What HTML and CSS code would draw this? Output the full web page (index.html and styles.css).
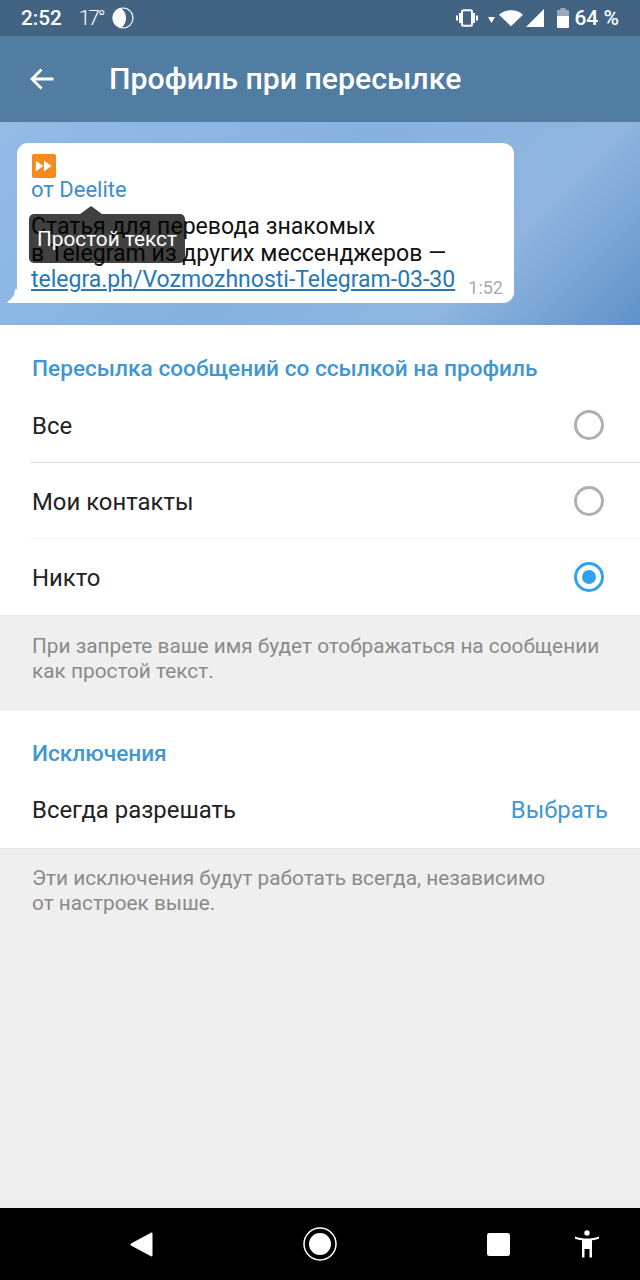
FILE: index.html
```html
<!DOCTYPE html>
<html lang="ru">
<head>
<meta charset="utf-8">
<title>Профиль при пересылке</title>
<link rel="stylesheet" href="styles.css">
</head>
<body>
<div class="screen">
  <header class="status">
    <div class="status-left">
      <span class="time">2:52</span>
      <span class="temp">17°</span>
      <svg class="moon" width="22" height="22" viewBox="0 0 22 22"><circle cx="11" cy="11" r="10" fill="none" stroke="#fff" stroke-width="1.2"/><path d="M9 1.200a10 10 0 0 0 0 19.600c3-1.800 5-5.400 5-9.800s-2-8-5-9.800z" fill="#fff"/></svg>
    </div>
    <div class="status-right">
      <svg class="ic-vib" width="24" height="18" viewBox="0 0 24 18"><rect x="7" y="1.200" width="10" height="15.600" rx="1.500" fill="none" stroke="#fff" stroke-width="2"/><path d="M4 4h2v10H4zM18 4h2v10h-2zM1 6.500h2v5H1zM21 6.500h2v5h-2z" fill="#fff"/></svg>
      <svg class="ic-arrow" width="7" height="6" viewBox="0 0 8 7"><path d="M0 0h8L4 7z" fill="#fff"/></svg>
      <svg class="ic-wifi" width="24" height="18" viewBox="0 0 26 18"><path d="M0 5.500C3.500 2 8 .5 13 .5s9.500 1.500 13 5L13 18z" fill="#fff"/></svg>
      <svg class="ic-signal" width="19" height="18" viewBox="0 0 19 18"><path d="M0 18L18 0v18z" fill="#fff"/></svg>
      <svg class="ic-batt" width="12" height="20" viewBox="0 0 12 20"><path d="M3.500 0h5v2H11a1 1 0 0 1 1 1v6H0V3a1 1 0 0 1 1-1h2.500z" fill="#fff" fill-opacity=".45"/><path d="M0 8h12v11a1 1 0 0 1-1 1H1a1 1 0 0 1-1-1z" fill="#fff"/></svg>
      <span class="batt-text">64 %</span>
    </div>
  </header>

  <div class="toolbar">
    <svg class="back" width="26" height="24" viewBox="0 0 26 24"><path d="M24.500 12H3M12.500 2.500L3 12l9.500 9.500" fill="none" stroke="#fff" stroke-width="2.800"/></svg>
    <h1 class="title">Профиль при пересылке</h1>
  </div>

  <section class="preview">
    <div class="bubble">
      <svg class="emoji" width="24" height="24" viewBox="0 0 25 25"><rect width="25" height="25" rx="2" fill="#f58a1f"/><path d="M4 7l8 5.500-8 5.500zM12.500 7l8 5.500-8 5.500z" fill="#fff"/></svg>
      <div class="from">от Deelite</div>
      <p class="msg">Статья для перевода знакомых<br>в Telegram из других мессенджеров —</p>
      <div class="last-line">
        <a class="link">telegra.ph/Vozmozhnosti-Telegram-03-30</a>
        <span class="stamp">1:52</span>
      </div>
      <svg class="tail" width="12" height="14" viewBox="0 0 12 14"><path d="M12 0v14H1C0 14 0 13 .800 12.500 5 10 8 6 8 0z" fill="#fff"/></svg>
      <div class="tooltip">Простой текст</div>
    </div>
  </section>

  <section class="card">
    <h2 class="section-title">Пересылка сообщений со ссылкой на профиль</h2>
    <div class="row"><span class="label">Все</span><span class="radio"></span></div>
    <div class="row row-faint"><span class="label">Мои контакты</span><span class="radio"></span></div>
    <div class="row row-last"><span class="label">Никто</span><span class="radio radio-on"></span></div>
  </section>
  <div class="hint hint-first">При запрете ваше имя будет отображаться на сообщении<br>как простой текст.</div>

  <section class="card card-exc">
    <h2 class="section-title">Исключения</h2>
    <div class="row row-short"><span>Всегда разрешать</span><span class="choose">Выбрать</span></div>
  </section>
  <div class="hint hint-fill">Эти исключения будут работать всегда, независимо<br>от настроек выше.</div>

  <nav class="navbar">
    <svg class="nav-back" width="23" height="25" viewBox="0 0 23 25"><path d="M21 .800c.8-.5 1.500 0 1.500 1v21.400c0 1-.7 1.500-1.500 1L1 13.500c-.8-.5-.8-1.500 0-2z" fill="#fff"/></svg>
    <svg class="nav-home" width="34" height="34" viewBox="0 0 34 34"><circle cx="17" cy="17" r="16" fill="none" stroke="#fff" stroke-width="1.500"/><circle cx="17" cy="17" r="11" fill="#fff"/></svg>
    <svg class="nav-recent" width="23" height="23" viewBox="0 0 23 23"><rect width="23" height="23" rx="2.500" fill="#fff"/></svg>
    <svg class="nav-a11y" width="24" height="28" viewBox="0 0 24 28"><circle cx="12" cy="3" r="2.700" fill="#fff"/><path d="M0 6.500c4 1.500 8 2 12 2s8-.5 12-2l.5 2c-2.500 1-5 1.500-7.500 1.800V27.500h-2.500V19h-5v8.500H7V10.300C4.500 10 2 9.500-.5 8.500z" fill="#fff"/></svg>
  </nav>
</div>
</body>
</html>
```

FILE: styles.css
```css
* { box-sizing: border-box; }
html, body { margin: 0; padding: 0; }
body { font-family: Roboto, "Noto Sans", sans-serif; background: #efefef; }
.screen { width: 640px; height: 1280px; display: flex; flex-direction: column; overflow: hidden; background: #efefef; }

.status { height: 36px; flex: none; background: #426482; color: #fff; display: flex; justify-content: space-between; align-items: center; padding: 0 21px 0 21px; }
.status-left, .status-right { display: flex; align-items: center; }
.time { font-size: 20.700px; font-weight: 500; }
.temp { font-size: 21px; font-weight: 300; margin-left: 17px; letter-spacing: -2.200px; }
.moon { margin-left: 9px; }
.status-right svg { display: block; }
.ic-arrow { margin-left: 9px; margin-top: 4px; }
.ic-wifi { margin-left: 4px; }
.ic-signal { margin-left: 3px; }
.ic-batt { margin-left: 12px; }
.batt-text { font-size: 21px; font-weight: 500; margin-left: 5px; }

.toolbar { height: 86px; flex: none; background: #517da2; display: flex; align-items: center; padding-left: 29px; }
.back { display: block; }
.title { margin: 0 0 2px 54px; font-size: 30.250px; font-weight: 500; color: #fff; white-space: nowrap; }

.preview { height: 203px; flex: none; padding: 21px 0 0 17px; background: linear-gradient(135deg, #92bbe6 0%, #86b2e0 45%, #8fb5df 75%, #5f91c8 100%); }
.bubble { position: relative; width: 497px; height: 160px; background: #fff; border-radius: 11px 11px 11px 0; padding: 11px 10px 0 14px; }
.emoji { display: block; margin-left: 1px; }
.from { font-size: 22px; color: #3d8ec9; line-height: 24px; }
.msg { margin: 11px 0 0; font-size: 23.100px; line-height: 27px; color: #111; white-space: nowrap; }
.last-line { display: flex; justify-content: space-between; align-items: flex-end; margin-top: -1px; }
.link { font-size: 23px; line-height: 27px; color: #2678b6; text-decoration: underline; white-space: nowrap; }
.stamp { font-size: 18px; color: #aaa; margin-bottom: -5px; margin-right: 1px; }
.tail { position: absolute; left: -10px; bottom: 0; }
.tooltip { position: absolute; left: 12px; top: 71px; width: 156px; height: 49px; background: rgba(0, 0, 0, .75); border-radius: 5px; color: #fff; font-size: 20.800px; display: flex; align-items: center; justify-content: center; }
.tooltip::before { content: ""; position: absolute; left: 51px; top: -8px; width: 0; height: 0; border-left: 11px solid transparent; border-right: 11px solid transparent; border-bottom: 8px solid rgba(0, 0, 0, .75); }

.card { background: #fff; flex: none; }
.section-title { margin: 0; padding: 30px 32px 4px; font-size: 22.650px; line-height: 28px; font-weight: 500; color: #3f97d3; }
.row { height: 76px; margin-left: 30px; padding: 0 36px 0 2px; display: flex; align-items: center; justify-content: space-between; font-size: 23.900px; color: #222; border-bottom: 1px solid #dedede; }
.row-faint { border-bottom-color: #f6f6f6; }
.row-last { border-bottom: 0; }
.label { margin-top: 2px; }
.radio { width: 30px; height: 30px; border: 3px solid #b0b0b0; border-radius: 50%; display: block; flex: none; }
.radio-on { border-color: #33a2ee; position: relative; }
.radio-on::after { content: ""; position: absolute; left: 5px; top: 5px; width: 14px; height: 14px; border-radius: 50%; background: #33a2ee; }

.hint { color: #8a8a8a; font-size: 20.800px; line-height: 25px; padding: 18px 32px 0; border-top: 1px solid #e4e4e4; }
.hint-first { height: 95px; flex: none; border-bottom: 1px solid #e8e8e8; }
.row-short { height: 76px; margin-left: 0; padding: 0 32px; border-bottom: 0; }
.choose { color: #3f97d3; }
.hint-fill { flex: 1; padding-top: 17px; }

.navbar { height: 72px; flex: none; background: #000; display: flex; align-items: center; }
.nav-back { margin-left: 130px; }
.nav-home { margin-left: 150px; }
.nav-recent { margin-left: 150px; }
.nav-a11y { margin-left: 65px; }
```
